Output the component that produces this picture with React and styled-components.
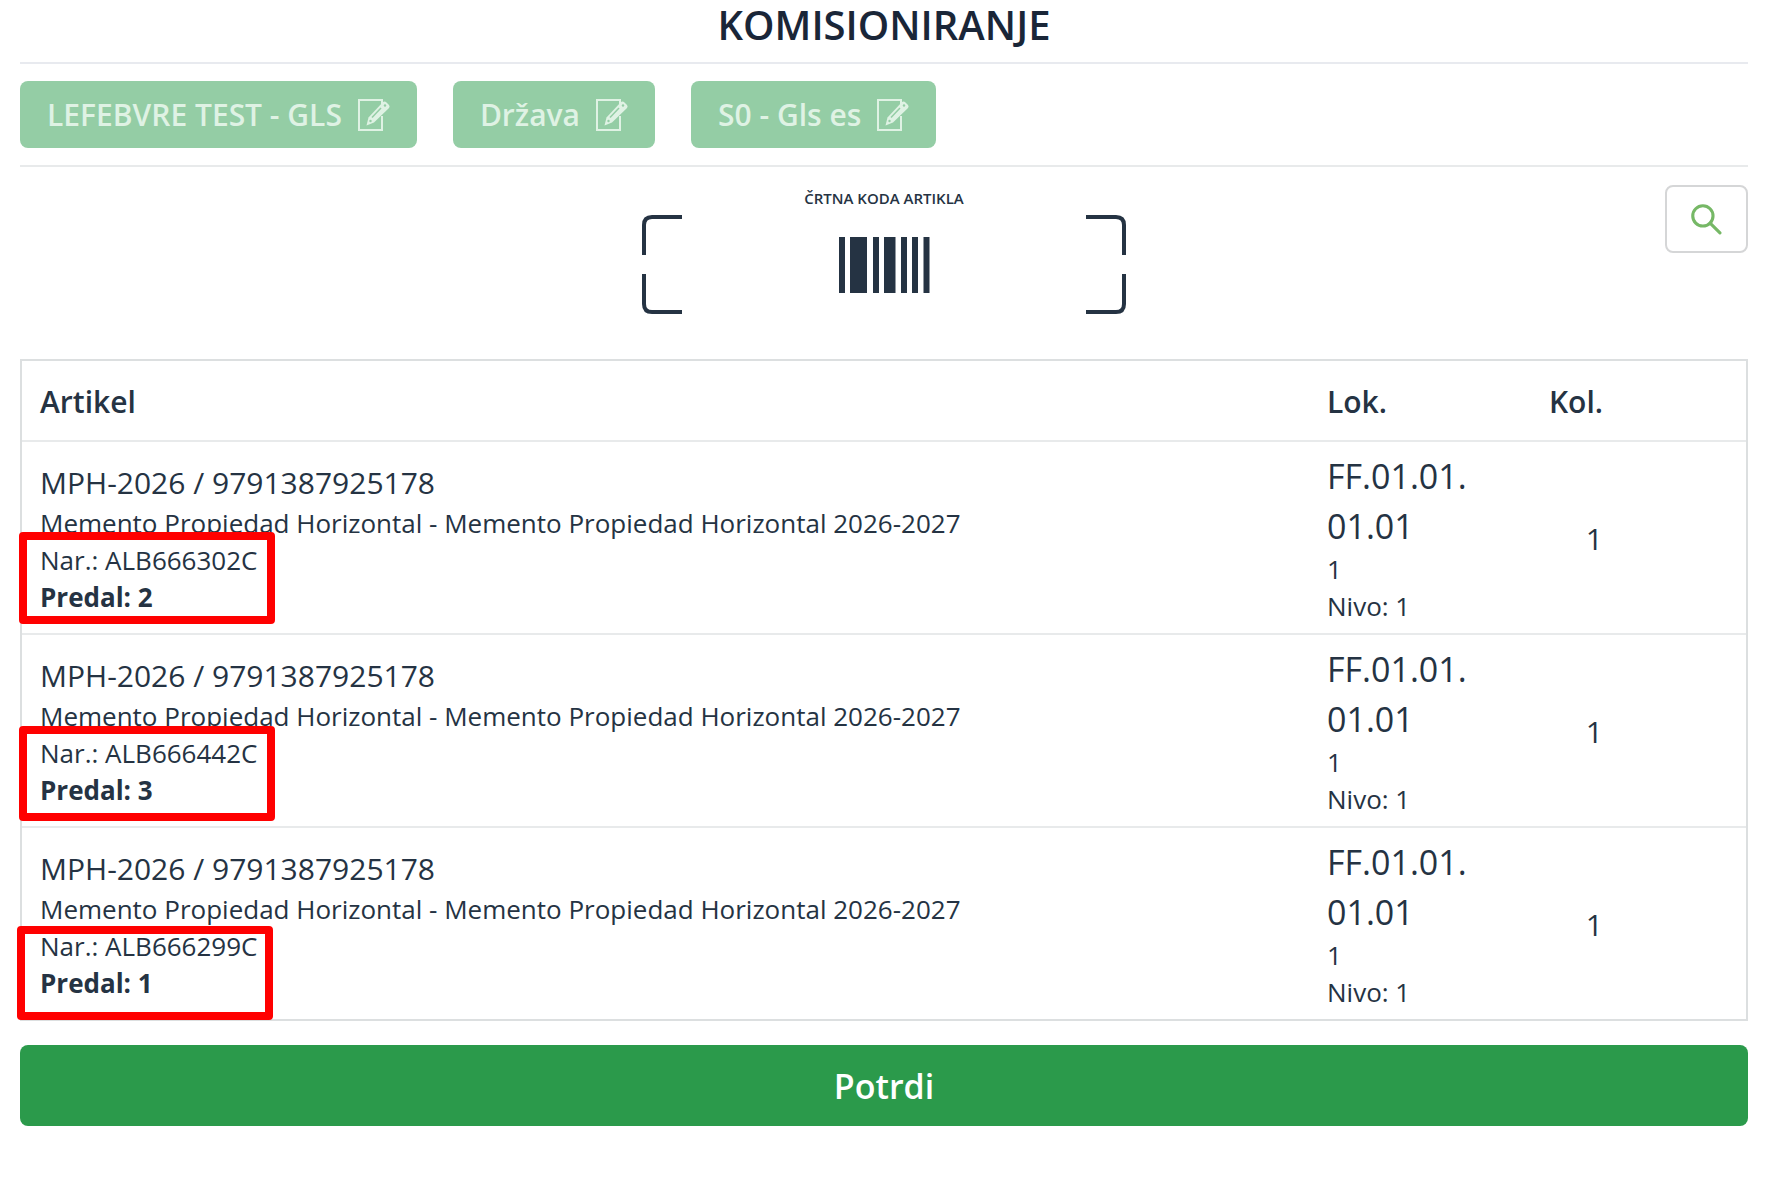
import React from 'react'
import styled, { createGlobalStyle } from 'styled-components'

const GlobalStyle = createGlobalStyle`
    * {
        box-sizing: border-box;
    }
    body {
        margin: 0;
        background-color: white;
        color: #253343;
        font-family: "Segoe UI", "Open Sans", "Noto Sans", sans-serif;
    }
    `
const Page = styled.main`
    padding: 0 17px 0 20px;
    `
const Title = styled.h1`
    margin: 0;
    height: 62px;
    color: #1a2638;
    font-size: 40px;
    font-weight: 600;
    line-height: 50px;
    text-align: center;
    `
const Filters = styled.div`
    display: flex;
    gap: 36px;
    padding: 17px 0;
    border-top: 2px solid #e8eaef;
    border-bottom: 2px solid #e8eaeb;
    `
const FilterButton = styled.button`
    display: flex;
    align-items: center;
    gap: 16px;
    height: 67px;
    padding: 0 27px;
    border: none;
    border-radius: 8px;
    background-color: #94cda5;
    color: #dff2e4;
    font-family: inherit;
    font-size: 30px;
    font-weight: 600;
    white-space: nowrap;
    `
const ScanRow = styled.div`
    display: grid;
    grid-template-columns: 1fr 484px 1fr;
    align-items: start;
    padding-top: 18px;
    height: 192px;
    `
const Scanner = styled.div`
    grid-column: 2;
    `
const ScanLabel = styled.div`
    padding-bottom: 4px;
    font-size: 15px;
    font-weight: 600;
    line-height: 26px;
    text-align: center;
    `
const ScanFrame = styled.svg`
    display: block;
    width: 100%;
    height: 99px;
    `
const SearchButton = styled.button`
    display: flex;
    align-items: center;
    justify-content: center;
    justify-self: end;
    width: 83px;
    height: 68px;
    border: 2px solid #d5d6d7;
    border-radius: 8px;
    background-color: white;
    `
const Table = styled.table`
    width: 100%;
    table-layout: fixed;
    border: 2px solid #dcdfe0;
    border-spacing: 0;
    `
const Col = styled.col`
    width: ${props => props.$width};
    `
const HeadCell = styled.th`
    height: 81px;
    padding: 2px 18px 0;
    border-bottom: 2px solid #e8eaeb;
    font-size: 30px;
    font-weight: 600;
    text-align: ${props => props.$align || "left"};
    `
const Cell = styled.td`
    padding: 9px 18px 8px;
    font-size: 30px;
    text-align: ${props => props.$align || "left"};
    vertical-align: middle;

    tr:not(:last-child) > & {
        border-bottom: 2px solid #e8eaeb;
    }
    `
const Code = styled.div`
    font-size: 30px;
    line-height: 45px;
    `
const Line = styled.div`
    font-size: 26px;
    font-weight: ${props => props.$bold ? 700 : 400};
    line-height: 37px;
    `
const Location = styled.div`
    font-size: 34px;
    line-height: 50px;
    `
const Order = styled.div`
    position: relative;
    `
const Marker = styled.div`
    position: absolute;
    left: ${props => props.$box.left}px;
    top: ${props => props.$box.top}px;
    width: 256px;
    height: ${props => props.$box.height}px;
    border: 8px solid #ff0000;
    border-radius: 4px;
    pointer-events: none;
    `
const ConfirmButton = styled.button`
    display: block;
    width: 100%;
    height: 81px;
    margin-top: 24px;
    border: none;
    border-radius: 8px;
    background-color: #2b9a4b;
    color: white;
    font-family: inherit;
    font-size: 34px;
    font-weight: 600;
    `

const filters = ["LEFEBVRE TEST - GLS", "Država", "S0 - Gls es"]

const items = [
    { order: "ALB666302C", drawer: 2, box: { left: -21, top: -10, height: 92 } },
    { order: "ALB666442C", drawer: 3, box: { left: -21, top: -9, height: 95 } },
    { order: "ALB666299C", drawer: 1, box: { left: -23, top: -2, height: 94 } }
]

const EditIcon = () => (
    <svg width="32" height="32" viewBox="0 0 32 32" fill="none" aria-hidden="true">
        <path d="M24 5V1H1v30h23V17" stroke="currentColor" strokeWidth="2" />
        <path d="M8.5 26.5l2-8L24.5 3.5q2-2 4 0l2 2q2 2 0 4L16 23.5z" fill="currentColor" />
        <path d="M14 18.5L23 9" stroke="#94cda5" strokeWidth="1.5" />
        <circle cx="27" cy="6.5" r="1.2" fill="#94cda5" />
        <circle cx="12.5" cy="22" r="1.2" fill="#94cda5" />
    </svg>
)

const SearchIcon = () => (
    <svg width="31" height="31" viewBox="0 0 30 30" fill="none" stroke="#76b866" strokeWidth="3" strokeLinecap="round" aria-hidden="true">
        <circle cx="11.5" cy="11.5" r="9.8" />
        <path d="M18.5 18.5L28 28" />
    </svg>
)

function ItemRow({ item }) {
    return (
        <tr>
            <Cell>
                <Code>MPH-2026 / 9791387925178</Code>
                <Line>Memento Propiedad Horizontal - Memento Propiedad Horizontal 2026-2027</Line>
                <Order>
                    <Line>Nar.: {item.order}</Line>
                    <Line $bold>Predal: {item.drawer}</Line>
                    <Marker $box={item.box} />
                </Order>
            </Cell>
            <Cell>
                <Location>FF.01.01.<br />01.01</Location>
                <Line>1</Line>
                <Line>Nivo: 1</Line>
            </Cell>
            <Cell $align="right">1</Cell>
            <Cell />
        </tr>
    )
}

export default function App() {
    return (
        <Page>
            <GlobalStyle />
            <Title>KOMISIONIRANJE</Title>
            <Filters>
                {filters.map(name => (
                    <FilterButton key={name} disabled>{name}<EditIcon /></FilterButton>
                ))}
            </Filters>
            <ScanRow>
                <Scanner>
                    <ScanLabel>ČRTNA KODA ARTIKLA</ScanLabel>
                    <ScanFrame viewBox="0 0 484 99" aria-hidden="true">
                        <g fill="none" stroke="#253343" strokeWidth="4">
                            <path d="M2 40V10q0-8 8-8h30M444 2h30q8 0 8 8v30" />
                            <path d="M2 59v30q0 8 8 8h30M444 97h30q8 0 8-8V59" />
                        </g>
                        <path
                            fill="#253343"
                            d="M197 22h6v56h-6zM208 22h17v56h-17zM231 22h6v56h-6zM242 22h11.5v56h-11.5zM259 22h6v56h-6zM270 22h6v56h-6zM281.5 22h6v56h-6z"
                        />
                    </ScanFrame>
                </Scanner>
                <SearchButton aria-label="Iskanje"><SearchIcon /></SearchButton>
            </ScanRow>
            <Table>
                <colgroup>
                    <Col />
                    <Col $width="220px" />
                    <Col $width="92px" />
                    <Col $width="125px" />
                </colgroup>
                <thead>
                    <tr>
                        <HeadCell>Artikel</HeadCell>
                        <HeadCell>Lok.</HeadCell>
                        <HeadCell $align="right">Kol.</HeadCell>
                        <HeadCell />
                    </tr>
                </thead>
                <tbody>
                    {items.map(item => <ItemRow key={item.order} item={item} />)}
                </tbody>
            </Table>
            <ConfirmButton>Potrdi</ConfirmButton>
        </Page>
    )
}
